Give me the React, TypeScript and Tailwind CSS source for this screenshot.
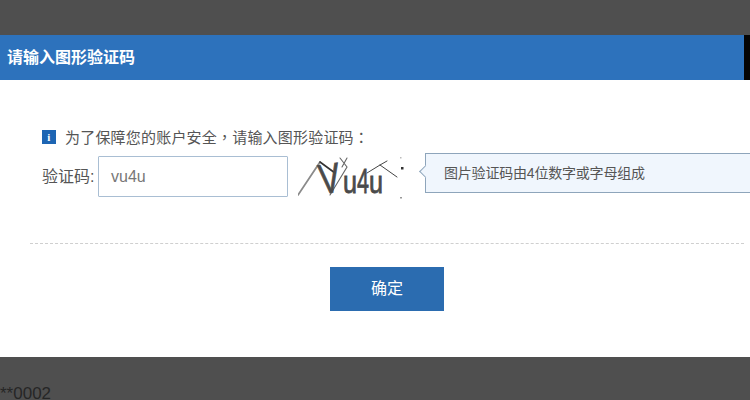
const cjk = "font-['Liberation_Sans','Noto_Sans_CJK_SC',sans-serif]"
const centeredPunct = "font-['Noto_Sans_CJK_TC',sans-serif]"

function Captcha() {
	return (
		<svg width="110" height="50" viewBox="0 0 110 50" className="shrink-0">
			<g fill="none" strokeLinecap="round">
				<path d="M0 43 L22 10" stroke="#8a8a8a" strokeWidth="1.8" />
				<path d="M22 10 L37 21" stroke="#333" strokeWidth="1.6" />
				<path d="M42 6 L49 15 L32 43 M49 6 L44 15" stroke="#666" strokeWidth="1.1" />
				<path d="M69 21 L82 13 L89 9 M82 13 L99 25" stroke="#444" strokeWidth="1" />
			</g>
			<g fill="#4a4a4a" stroke="#4a4a4a" strokeWidth="0.8" fontFamily="'Liberation Sans', sans-serif">
				<text x="21" y="41" fontSize="42" textLength="21" lengthAdjust="spacingAndGlyphs" transform="rotate(-8 30 28)">V</text>
				<text x="45" y="41" fontSize="32" textLength="14" lengthAdjust="spacingAndGlyphs">u</text>
				<text x="59" y="41" fontSize="35" textLength="12" lengthAdjust="spacingAndGlyphs">4</text>
				<text x="71" y="41" fontSize="32" textLength="14" lengthAdjust="spacingAndGlyphs">u</text>
			</g>
			<rect x="103" y="15" width="2.5" height="2.5" fill="#333" />
			<rect x="102" y="5" width="1.5" height="1.5" fill="#bbb" />
			<rect x="102" y="45" width="2" height="1.5" fill="#999" />
		</svg>
	)
}

export default function App() {
	return (
		<div className={`w-[750px] h-[400px] overflow-hidden bg-[#4f4f4f] flex flex-col ${cjk}`}>
			<div className="h-[35px] shrink-0" />

			<div className="h-[45px] shrink-0 flex">
				<div className="flex-1 bg-[#2d72bc] flex items-center pl-[7px] text-white text-[16px] font-bold">
					请输入图形验证码
				</div>
				<div className="w-[6px] bg-[#050505]" />
			</div>

			<div className="h-[277px] shrink-0 bg-white flex flex-col">
				<div className="pl-[42px] pt-[47px] h-[70px] flex items-start gap-[9px] text-[15px] leading-[20px] tracking-[0.2px] text-[#555]">
					<span className="mt-[3px] w-[14px] h-[14px] bg-[#1d65b3] text-white text-[11px] leading-[14px] font-bold text-center font-['Liberation_Serif',serif]">
						i
					</span>
					<span>
						为了保障您的账户安全<span className={centeredPunct}>，</span>请输入图形验证码<span className={centeredPunct}>：</span>
					</span>
				</div>

				<div className="flex items-center pl-[42px] h-[41px] mt-[6px]">
					<span className="w-[56px] text-[16px] text-[#555]">验证码:</span>
					<div className="w-[190px] h-[41px] border border-[#a9bed3] rounded-[1px] flex items-center pl-[12px] text-[16px] text-[#777]">
						vu4u
					</div>
					<div className="ml-[10px]">
						<Captcha />
					</div>
					<div className="relative ml-[17px] flex-1 self-start mt-[-3px] h-[40px] bg-[#f0f6fd] border-y border-l border-[#8ea5bb] flex items-center pl-[18px] text-[14px] tracking-[-0.2px] text-[#555]">
						<span className="absolute left-[-5px] top-[13px] w-[9px] h-[9px] rotate-45 bg-[#f0f6fd] border-l border-b border-[#8ea5bb]" />
						图片验证码由4位数字或字母组成
					</div>
				</div>

				<div className="ml-[30px] mr-[6px] mt-[46px] border-t border-dashed border-[#cfcfcf]" />

				<div className="pl-[330px] pt-[23px]">
					<div className="w-[114px] h-[44px] bg-[#2b6cb0] flex items-center justify-center text-white text-[16px]">
						确定
					</div>
				</div>
			</div>

			<div className="flex-1 pt-[28px] text-[17px] leading-[18px] text-[#262626]">**0002</div>
		</div>
	)
}
